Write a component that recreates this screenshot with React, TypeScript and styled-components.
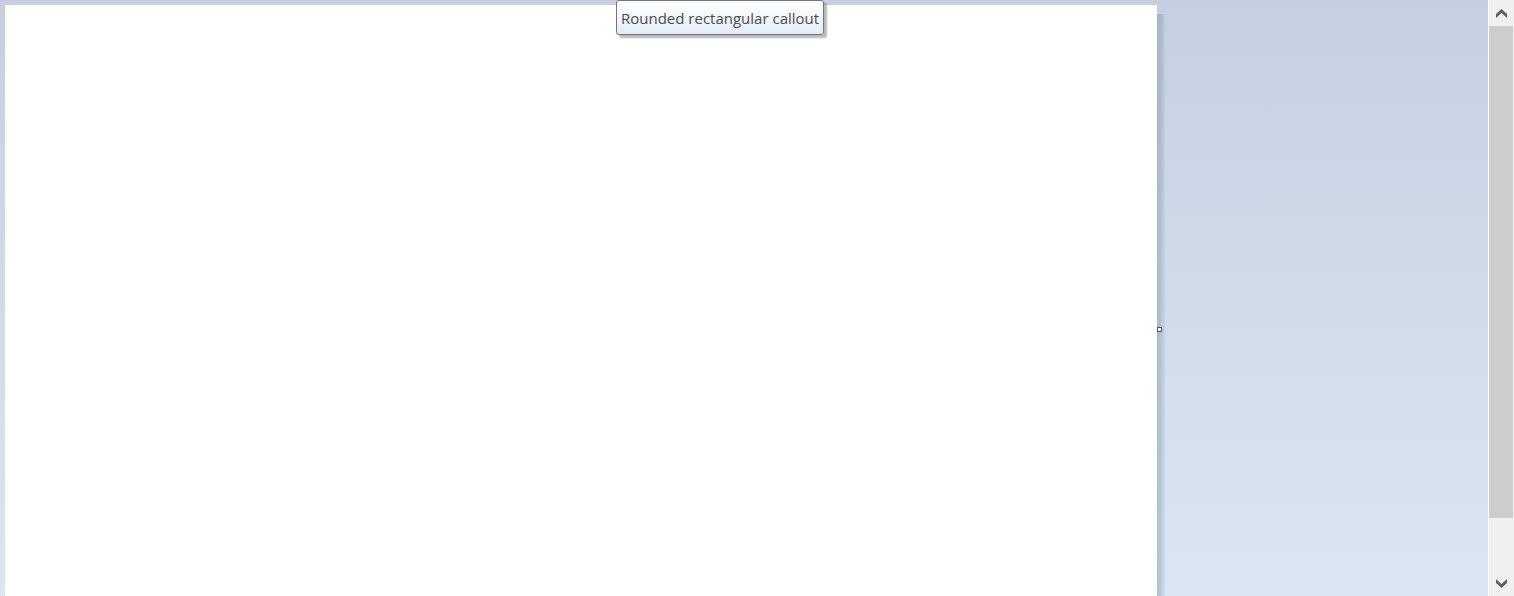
import React from 'react';
import styled, { createGlobalStyle } from 'styled-components';

const GlobalStyle = createGlobalStyle`
  * { box-sizing: border-box; }
  body {
    margin: 0;
    overflow: hidden;
    font-family: "Open Sans", "Noto Sans", sans-serif;
  }
`;

const Workspace = styled.div`
  display: flex;
  position: relative;
  height: 100vh;
`;

const Desk = styled.main`
  flex: 1;
  min-width: 0;
  display: grid;
  grid-template-columns: minmax(0, 1fr) 8px 323px;
  align-items: start;
  padding: 5px 0 0 5px;
  overflow: hidden;
  background: linear-gradient(#c5cfe1 0%, #c7d1e2 8%, #d4deec 67%, #dce6f2 100%);
`;

const Sheet = styled.section`
  aspect-ratio: 16 / 9;
  background: #fff;
`;

const SheetEdge = styled.div`
  position: relative;
  align-self: stretch;
`;

const Shadow = styled.div`
  height: 100%;
  margin-top: 9px;
  background: linear-gradient(
    to right,
    rgba(96, 126, 154, 0.36),
    rgba(96, 126, 154, 0.22) 60%,
    rgba(96, 126, 154, 0.06)
  );
`;

const ResizeHandle = styled.button`
  position: absolute;
  top: 50%;
  left: 0;
  width: 5px;
  height: 5px;
  margin: -2px 0 0;
  padding: 0;
  border: 1px solid #555;
  background: #fff;
  cursor: ew-resize;
`;

const Tooltip = styled.div`
  position: absolute;
  top: 0;
  left: 616px;
  height: 35px;
  padding: 0 4px;
  border: 1px solid #767676;
  border-radius: 3px;
  background: linear-gradient(#fff, #e4ecf7);
  box-shadow: 3px 3px 2px rgba(0, 0, 0, 0.28);
  color: #4c4c4c;
  font-size: 15px;
  line-height: 34px;
  white-space: nowrap;
`;

const ScrollBar = styled.aside`
  flex: 0 0 26px;
  display: flex;
  flex-direction: column;
  border-left: 1px solid #fff;
  background: #f0f0f0;
`;

const ScrollButton = styled.button`
  flex: 0 0 26px;
  display: flex;
  align-items: center;
  justify-content: center;
  padding: 1px 0 0;
  border: 0;
  background: #f0f0f0;
`;

const Track = styled.div`
  flex: 1;
  padding-right: 1px;
`;

const Thumb = styled.div`
  height: 90.4%;
  background: #cdcdcd;
`;

const Chevron = ({ down = false }: { down?: boolean }) => (
  <svg width="11" height="9" viewBox="0 0 11 9" aria-hidden="true">
    <path
      d={down ? 'M0 0L5.5 5L11 0V4L5.5 9L0 4Z' : 'M0 9L5.5 4L11 9V5L5.5 0L0 5Z'}
      fill="#606060"
    />
  </svg>
);

export default function App() {
  return (
    <>
      <GlobalStyle />
      <Workspace>
        <Desk>
          <Sheet aria-label="Canvas" />
          <SheetEdge>
            <Shadow />
            <ResizeHandle type="button" aria-label="Resize canvas width" />
          </SheetEdge>
        </Desk>
        <ScrollBar aria-label="Vertical scroll">
          <ScrollButton type="button" aria-label="Scroll up">
            <Chevron />
          </ScrollButton>
          <Track>
            <Thumb />
          </Track>
          <ScrollButton type="button" aria-label="Scroll down">
            <Chevron down />
          </ScrollButton>
        </ScrollBar>
        <Tooltip role="tooltip">Rounded rectangular callout</Tooltip>
      </Workspace>
    </>
  );
}
